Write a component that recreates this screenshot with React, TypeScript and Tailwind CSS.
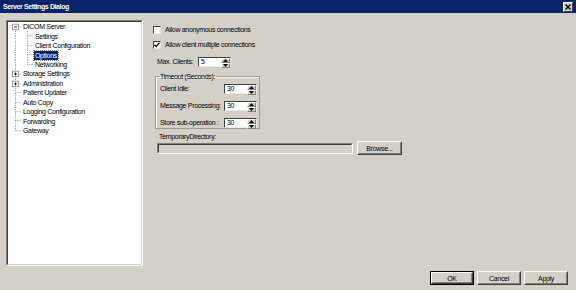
import React from "react";

type TreeRow = {
  label: string;
  level: 0 | 1;
  box?: "minus" | "plus";
  selected?: boolean;
  first?: boolean;
  last?: boolean;
};

const TREE: TreeRow[] = [
  { label: "DICOM Server", level: 0, box: "minus", first: true },
  { label: "Settings", level: 1, first: true },
  { label: "Client Configuration", level: 1 },
  { label: "Options", level: 1, selected: true },
  { label: "Networking", level: 1, last: true },
  { label: "Storage Settings", level: 0, box: "plus" },
  { label: "Administration", level: 0, box: "plus" },
  { label: "Patient Updater", level: 0 },
  { label: "Auto Copy", level: 0 },
  { label: "Logging Configuration", level: 0 },
  { label: "Forwarding", level: 0 },
  { label: "Gateway", level: 0, last: true },
];

const LINE = "#a0a0a0";

// one 12px column of tree connector lines
const TreeCell = ({
  top,
  bottom,
  stub,
  box,
}: {
  top: boolean;
  bottom: boolean;
  stub: boolean;
  box?: "minus" | "plus";
}) => (
  <svg width="12" height="9.45" viewBox="0 0 12 9.45" className="shrink-0">
    {top && <line x1="6.5" y1="0" x2="6.5" y2="4.7" stroke={LINE} strokeDasharray="1 1" />}
    {bottom && <line x1="6.5" y1="4.7" x2="6.5" y2="9.45" stroke={LINE} strokeDasharray="1 1" />}
    {stub && <line x1="6.5" y1="4.7" x2="12" y2="4.7" stroke={LINE} strokeDasharray="1 1" />}
    {box && (
      <g>
        <rect x="3.5" y="2.2" width="6" height="5.5" fill="white" stroke="#808080" strokeWidth="0.8" />
        <line x1="5" y1="4.95" x2="8" y2="4.95" stroke="#000" strokeWidth="0.8" />
        {box === "plus" && <line x1="6.5" y1="3.45" x2="6.5" y2="6.45" stroke="#000" strokeWidth="0.8" />}
      </g>
    )}
  </svg>
);

const Tree = () => (
  <div className="flex flex-col pl-[1px]">
    {TREE.map((r) => (
      <div key={r.label} className="flex items-center h-[9.45px]">
        {r.level === 0 ? (
          <TreeCell top={!r.first} bottom={!r.last} stub box={r.box} />
        ) : (
          <>
            <TreeCell top bottom stub={false} />
            <TreeCell top bottom={!r.last} stub />
          </>
        )}
        <span
          className={`ml-[1px] px-[1px] leading-[9px] whitespace-nowrap ${
            r.selected ? "bg-[#0a246a] text-white outline outline-dotted outline-[0.5px] outline-[#808080]" : "text-black"
          }`}
        >
          {r.label}
        </span>
      </div>
    ))}
  </div>
);

const Checkbox = ({ checked }: { checked?: boolean }) => (
  <div className="w-[8px] h-[8px] bg-white border border-t-[#404040] border-l-[#404040] border-r-[#e8e8e8] border-b-[#e8e8e8] flex items-center justify-center">
    {checked && (
      <svg width="6" height="6" viewBox="0 0 6 6">
        <path d="M0.5 2.8 L2.2 4.6 L5.5 0.8" fill="none" stroke="#000" strokeWidth="1.3" />
      </svg>
    )}
  </div>
);

const Arrow = ({ up }: { up?: boolean }) => (
  <svg width="5" height="3" viewBox="0 0 5 3">
    <path d={up ? "M0 3 L2.5 0 L5 3 Z" : "M0 0 L2.5 3 L5 0 Z"} fill="#000" />
  </svg>
);

const Spin = ({ value, w }: { value: string; w: string }) => (
  <div
    className={`${w} h-[10px] flex bg-white border border-t-[#404040] border-l-[#404040] border-r-[#e8e8e8] border-b-[#e8e8e8]`}
  >
    <span className="flex-1 pl-[2px] leading-[8px] text-black">{value}</span>
    <div className="w-[9px] flex flex-col">
      <div className="flex-1 bg-[#d4d0c8] flex items-center justify-center border border-t-white border-l-white border-r-[#808080] border-b-[#808080]">
        <Arrow up />
      </div>
      <div className="flex-1 bg-[#d4d0c8] flex items-center justify-center border border-t-white border-l-white border-r-[#808080] border-b-[#808080]">
        <Arrow />
      </div>
    </div>
  </div>
);

const Button = ({ label, def, w }: { label: string; def?: boolean; w: string }) => (
  <div className={`${w} h-[14px] ${def ? "border border-black" : ""}`}>
    <div className="w-full h-full border border-t-white border-l-white border-r-[#404040] border-b-[#404040] bg-[#d4d0c8]">
      <div className="w-full h-full border border-t-[#d4d0c8] border-l-[#d4d0c8] border-r-[#808080] border-b-[#808080] flex items-center justify-center text-black leading-none">
        {label}
      </div>
    </div>
  </div>
);

const TimeoutRow = ({ label, value }: { label: string; value: string }) => (
  <div className="flex items-center h-[10px]">
    <span className="w-[68px] pl-[4px] whitespace-nowrap">{label}</span>
    <Spin value={value} w="w-[33px]" />
  </div>
);

export default function App() {
  return (
    <div
      className="w-[576px] h-[290px] bg-[#d4d0c8] flex flex-col text-[7px] tracking-[-0.32px] text-black overflow-hidden"
      style={{ fontFamily: '"Liberation Sans", Arial, sans-serif' }}
    >
      {/* title bar */}
      <div className="h-[13px] bg-[#0a246a] flex items-center justify-between pl-[3px] pr-[3px]">
        <span className="text-white font-bold text-[7px] tracking-[-0.4px] leading-none">Server Settings Dialog</span>
        <div className="w-[10px] h-[10px] bg-[#d4d0c8] border border-t-white border-l-white border-r-[#404040] border-b-[#404040] flex items-center justify-center">
          <svg width="6" height="6" viewBox="0 0 6 6">
            <path d="M0.5 0.5 L5.5 5.5 M5.5 0.5 L0.5 5.5" stroke="#000" strokeWidth="1.4" />
          </svg>
        </div>
      </div>

      <div className="flex h-[254px] pt-[7px] pl-[6px]">
        {/* tree panel */}
        <div className="w-[137px] h-[246px] border border-t-[#808080] border-l-[#808080] border-r-white border-b-white">
          <div className="w-full h-full bg-white border border-t-[#404040] border-l-[#404040] border-r-[#d4d0c8] border-b-[#d4d0c8]">
            <Tree />
          </div>
        </div>

        {/* options */}
        <div className="ml-[10px] pt-[5px] flex flex-col">
          <div className="flex items-center h-[10px] gap-[4px]">
            <Checkbox />
            <span>Allow anonymous connections</span>
          </div>
          <div className="flex items-center h-[10px] gap-[4px] mt-[5px]">
            <Checkbox checked />
            <span>Allow client multiple connections</span>
          </div>
          <div className="flex items-center h-[10px] mt-[7px]">
            <span className="w-[45px] pl-[4px]">Max. Clients:</span>
            <Spin value="5" w="w-[33px]" />
          </div>

          <fieldset className="mt-[6px] ml-[2px] w-[105px] h-[56px] border border-[#9c9a94] shadow-[inset_1px_1px_0_white] px-0 pb-0 flex flex-col">
            <legend className="ml-[3px] px-[1px] leading-[7px]">Timeout (Seconds):</legend>
            <div className="flex flex-col gap-[7px] pt-[4px]">
              <TimeoutRow label="Client Idle:" value="30" />
              <TimeoutRow label="Message Processing:" value="30" />
              <TimeoutRow label="Store sub-operation :" value="30" />
            </div>
          </fieldset>

          <span className="mt-[4px] pl-[6px] leading-[8px]">TemporaryDirectory:</span>
          <div className="flex items-center pl-[4px]">
            <div className="w-[196px] h-[11px] bg-[#d4d0c8] border border-t-[#808080] border-l-[#808080] border-r-white border-b-white">
              <div className="w-full h-full border border-t-[#404040] border-l-[#404040] border-r-[#d4d0c8] border-b-[#d4d0c8]" />
            </div>
            <div className="ml-[4px]">
              <Button label="Browse..." w="w-[45px]" />
            </div>
          </div>
        </div>
      </div>

      {/* footer buttons */}
      <div className="flex justify-end gap-[3px] pr-[8px] pt-[4px]">
        <Button label="OK" def w="w-[44px]" />
        <Button label="Cancel" w="w-[44px]" />
        <Button label="Apply" w="w-[44px]" />
      </div>
    </div>
  );
}
